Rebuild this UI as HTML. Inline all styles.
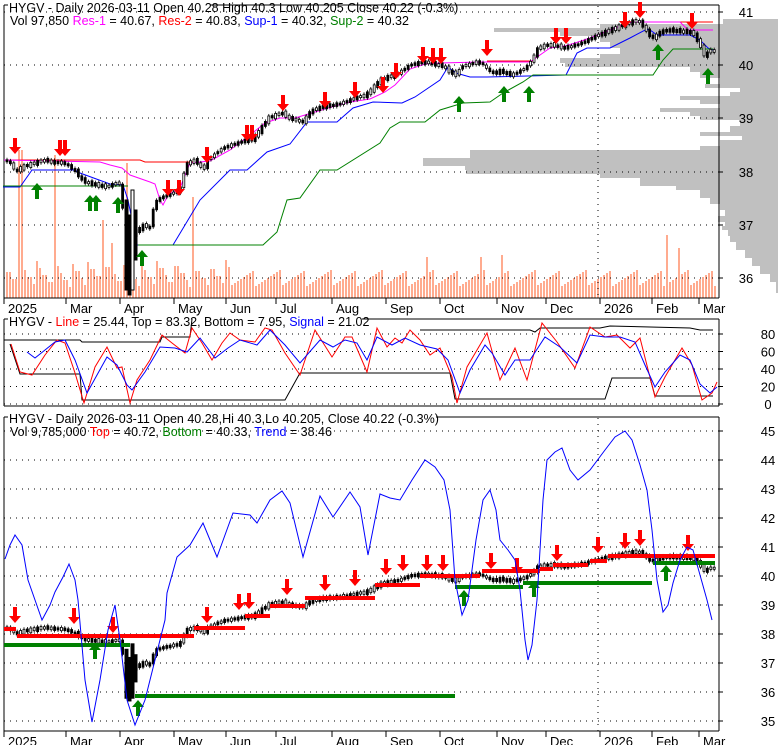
<!DOCTYPE html>
<html><head><meta charset="utf-8">
<style>
html,body{margin:0;padding:0;background:#fff;}
svg{display:block;font-family:"Liberation Sans",sans-serif;}
</style></head>
<body>
<svg id="c" width="780" height="745" viewBox="0 0 780 745" xmlns="http://www.w3.org/2000/svg">
<g id="bg"></g>
<g id="g"></g>
<g font-size="12.5" fill="#000">
<text x="9" y="12">HYGV - Daily 2026-03-11 Open 40.28  High 40.3  Low 40.205  Close 40.22 (-0.3%)</text>
<text x="10" y="25">Vol 97,850 <tspan fill="#ff00ff">Res-1</tspan> = 40.67, <tspan fill="#ff0000">Res-2</tspan> = 40.83, <tspan fill="#0000ff">Sup-1</tspan> = 40.32, <tspan fill="#008000">Sup-2</tspan> = 40.32</text>
<text x="9" y="326">HYGV - <tspan fill="#ff0000">Line</tspan> = 25.44, Top = 83.32, Bottom = 7.95, <tspan fill="#0000ff">Signal</tspan> = 21.02</text>
<text x="9" y="423">HYGV - Daily 2026-03-11 Open 40.28,Hi 40.3,Lo 40.205, Close 40.22 (-0.3%)</text>
<text x="10" y="436">Vol 9,785,000 <tspan fill="#ff0000">Top</tspan> = 40.72, <tspan fill="#008000">Bottom</tspan> = 40.33, <tspan fill="#0000ff">Trend</tspan> = 38.46</text>
</g>
<g font-size="13" fill="#000" id="ax"></g>
</svg>
<script>
(function(){
var NS="http://www.w3.org/2000/svg";
var G=document.getElementById('g'),BG=document.getElementById('bg'),AX=document.getElementById('ax');
function el(par,t,a){var e=document.createElementNS(NS,t);for(var k in a)e.setAttribute(k,a[k]);par.appendChild(e);return e;}
function pl(par,pts,col,w){el(par,'polyline',{points:pts.map(function(p){return p[0]+','+p[1]}).join(' '),fill:'none',stroke:col,'stroke-width':w||1});}
function txt(x,y,s,anchor){var t=el(AX,'text',{x:x,y:y});t.textContent=s;if(anchor)t.setAttribute('text-anchor',anchor);}
var R=719,L=4;
var prof=[[19,723],[24,600],[28,494],[32,560],[36,600],[42,610],[48,620],[54,600],[58,560],[63,565],[67,690],[72,700],[78,720],[84,705],[88,740],[92,730],[96,680],[100,700],[104,720],[108,660],[112,690],[116,700],[120,740],[126,730],[132,700],[136,742],[140,720],[146,700],[150,470],[154,470],[158,423],[162,423],[166,465],[170,466],[174,600],[178,640],[182,640],[186,676],[190,700],[194,700],[198,710],[204,720],[210,725],[216,718],[222,725],[226,722],[230,728],[236,730],[242,736],[250,745],[258,752],[266,760],[274,770],[282,776],[293,778]];
var d='M778,19';for(var i=0;i<prof.length;i++){var y=prof[i][0],ny=(i+1<prof.length?prof[i+1][0]:293);d+=' L'+prof[i][1]+','+y+' L'+prof[i][1]+','+ny;}d+=' L778,293 Z';
el(BG,'path',{d:d,fill:'#c0c0c0'});
function frame(tp,bot,tx){el(G,'line',{x1:L,y1:tp,x2:L,y2:bot,stroke:'#000'});el(G,'line',{x1:L,y1:bot,x2:R,y2:bot,stroke:'#000'});el(G,'line',{x1:R,y1:tp,x2:R,y2:bot,stroke:'#000'});el(G,'line',{x1:tx,y1:tp,x2:R,y2:tp,stroke:'#000'});el(G,'line',{x1:L,y1:tp,x2:8,y2:tp,stroke:'#000'});}
function hgrid(ys){ys.forEach(function(y){el(G,'line',{x1:L,y1:y,x2:R,y2:y,stroke:'#000','stroke-dasharray':'1,5'});el(G,'line',{x1:R,y1:y,x2:R+4,y2:y,stroke:'#000'});});}
var p1=[12,65,118,172,225,278];hgrid(p1);
['41','40','39','38','37','36'].forEach(function(s,i){txt(746,p1[i]+5,s,'middle');});
el(G,'line',{x1:598,y1:6,x2:598,y2:298,stroke:'#000','stroke-dasharray':'1,5'});
var p2=[334,351.5,369,386.5,404];hgrid(p2);
['80','60','40','20','0'].forEach(function(s,i){txt(768,p2[i]+5,s,'middle');});
var p3=[];for(var k=0;k<11;k++)p3.push(431+k*29);hgrid(p3);
['45','44','43','42','41','40','39','38','37','36','35'].forEach(function(s,i){txt(768,p3[i]+5,s,'middle');});
el(G,'line',{x1:598,y1:418,x2:598,y2:731,stroke:'#000','stroke-dasharray':'1,5'});
var mo=[[4,'2025'],[66,'Mar'],[120,'Apr'],[174,'May'],[226,'Jun'],[276,'Jul'],[332,'Aug'],[386,'Sep'],[440,'Oct'],[497,'Nov'],[546,'Dec'],[600,'2026'],[652,'Feb'],[699,'Mar']];
[298,731].forEach(function(by){mo.forEach(function(m){el(G,'line',{x1:m[0],y1:by,x2:m[0],y2:by+6,stroke:'#000'});var t=el(AX,'text',{x:m[0]+4,y:by+15});t.textContent=m[1];});});
var spikes={18:150,21:150,55:155,103:220,110:243,127:163,193:197,426:257,480:257,502:255,665:235,678:248};
for(var x=6;x<717;x+=3){var h=10+((x*37)%23)+((x*13)%7);if(x>230)h=12+((x*29)%17);var vt=298-h;for(var s in spikes){if(Math.abs(s-x)<2)vt=spikes[s];}
el(BG,'rect',{x:x,y:vt,width:2,height:298-vt,fill:'#ffab8f'});}
frame(5,298,210);frame(319,406,362);frame(417,731,436);
var P=[[5,160],[12,162],[18,172],[22,168],[30,165],[40,162],[48,160],[55,163],[62,162],[70,165],[78,172],[84,180],[90,183],[98,185],[108,187],[116,184],[121,182],[124,200],[127,235],[130,250],[134,235],[140,230],[146,225],[152,228],[156,205],[162,198],[168,196],[175,193],[182,190],[188,165],[195,160],[200,163],[205,170],[210,160],[216,155],[222,150],[230,146],[240,143],[248,140],[255,139],[262,130],[270,118],[278,115],[285,113],[290,118],[298,120],[305,122],[312,112],[320,108],[330,106],[338,105],[345,103],[352,100],[360,97],[368,95],[375,88],[382,80],[390,77],[398,75],[405,70],[412,65],[420,63],[428,62],[435,64],[445,66],[452,72],[458,75],[464,66],[470,65],[478,62],[485,64],[490,70],[496,73],[502,71],[508,73],[515,75],[520,72],[528,68],[534,60],[540,48],[548,45],[555,45],[562,47],[568,48],[575,46],[582,44],[590,40],[598,36],[605,33],[612,30],[620,27],[628,24],[636,21],[642,22],[648,30],[652,36],[656,38],[662,32],[670,30],[680,31],[690,32],[696,34],[700,42],[704,48],[707,58],[710,52],[713,50],[717,52]];
function interp(x){for(var i=0;i<P.length-1;i++){if(x>=P[i][0]&&x<=P[i+1][0]){var t=(x-P[i][0])/(P[i+1][0]-P[i][0]);return P[i][1]+t*(P[i+1][1]-P[i][1]);}}return P[P.length-1][1];}
function to3(y){return 547+(y-12)*0.544;}
pl(G,[[4,160],[140,160],[145,162],[195,162]],'#ff0000');
pl(G,[[487,61],[533,61]],'#ff0000');pl(G,[[680,22],[713,22]],'#ff0000');
pl(G,[[4,160],[100,162],[110,165],[122,168],[130,175],[150,182],[155,184],[160,200],[163,205],[168,195],[180,188],[190,163],[210,161],[230,150],[250,135],[265,123],[280,118],[295,118],[315,112],[335,106],[350,102],[370,99],[385,92],[395,85],[410,69],[425,64],[440,63],[480,62],[530,62],[540,55],[550,48],[565,46],[575,43],[590,38],[605,32],[620,26],[632,22],[680,22],[688,30],[713,30]],'#ff00ff');
pl(G,[[3,187],[20,187],[32,170],[75,170],[80,173],[110,184],[123,185],[128,200],[137,245],[173,245],[200,200],[230,170],[247,170],[267,152],[290,144],[307,122],[337,122],[353,108],[373,102],[402,103],[415,97],[440,80],[448,67],[456,73],[470,77],[487,77],[566,75],[570,67],[577,53],[587,48],[610,48],[630,38],[647,29],[650,30],[657,35],[690,35],[700,40],[708,48],[713,50]],'#0000ff');
pl(G,[[3,186],[110,186],[128,186]],'#008000');
pl(G,[[138,245],[263,245],[277,232],[287,200],[300,198],[320,170],[337,170],[380,143],[390,128],[400,122],[425,122],[440,110],[463,103],[490,102],[503,93],[523,82],[533,75],[653,75],[663,60],[673,49],[713,49]],'#008000');
function candles(map){
 for(var x=6;x<716;x+=3.4){var j=((Math.round(x)*17)%7-3)*0.5;var y=map(interp(x))+j;var n=map(interp(x+3))-j*0.5;var ct=Math.min(y,n)-1,ch=Math.abs(n-y)+2;var fill=((Math.round(x)*7)%5<2)?'#fff':'#000';
 el(G,'line',{x1:x+1,y1:ct-2,x2:x+1,y2:ct+ch+2,stroke:'#000','stroke-width':0.8});
 el(G,'rect',{x:x,y:ct,width:2,height:ch,fill:fill,stroke:'#000','stroke-width':0.8});}
}
candles(function(v){return v;});
[[125,200,290],[128,215,295],[131,190,290],[134,210,260]].forEach(function(c){el(G,'rect',{x:c[0],y:c[1],width:3,height:c[2]-c[1],fill:(c[0]==131?'#fff':'#000'),stroke:'#000'});});
candles(to3);
[[125,to3(200),to3(290)],[128,to3(215),to3(295)],[131,to3(190),to3(290)],[134,to3(210),to3(260)]].forEach(function(c){el(G,'rect',{x:c[0],y:c[1],width:3,height:c[2]-c[1],fill:'#000',stroke:'#000'});});
function dn(cx,t){el(G,'path',{d:'M'+(cx-2)+','+t+' h4 v9 h4 l-6,7 l-6,-7 h4 z',fill:'#ff0000'});}
function up(cx,t){el(G,'path',{d:'M'+cx+','+t+' l6,7 h-4 v9 h-4 v-9 h-4 z',fill:'#008000'});}
[[15,138],[60,140],[65,140],[168,180],[179,180],[207,147],[247,125],[252,125],[283,95],[325,92],[355,82],[383,77],[396,63],[423,47],[433,48],[441,48],[487,40],[556,28],[566,28],[625,12],[640,2],[692,13]].forEach(function(a){dn(a[0],a[1]);});
[[37,183],[90,195],[96,195],[118,197],[142,250],[459,96],[504,86],[529,86],[658,44],[708,68]].forEach(function(a){up(a[0],a[1]);});
pl(G,[[4,340],[80,340],[82,342],[160,342],[162,337],[190,337],[192,319]],'#000');
pl(G,[[420,330],[530,330],[535,332],[540,328],[600,328],[610,326],[690,328],[700,330],[713,330]],'#000');
pl(G,[[10,344],[20,374],[80,374],[82,400],[285,400],[300,373],[450,373],[455,399],[605,399],[612,378],[650,378],[655,396],[713,396]],'#000');
var red2=[[11,344],[20,372],[32,375],[45,355],[57,340],[65,343],[75,373],[84,403],[95,367],[107,347],[117,368],[122,367],[130,403],[137,380],[150,360],[162,335],[172,343],[185,353],[192,328],[202,343],[212,360],[222,343],[230,333],[240,340],[255,342],[265,328],[272,330],[285,353],[300,375],[315,330],[332,357],[345,337],[352,337],[367,372],[377,328],[387,347],[395,338],[402,343],[410,330],[420,340],[430,355],[440,348],[452,377],[457,403],[467,367],[477,350],[487,333],[500,380],[515,348],[527,380],[542,323],[557,342],[575,368],[590,327],[605,337],[617,335],[630,348],[640,338],[655,397],[665,377],[682,348],[692,365],[702,400],[712,393],[717,382]];
pl(G,red2,'#ff0000');
var blue2=[[27,352],[35,358],[45,350],[55,342],[65,340],[75,360],[87,393],[97,375],[107,357],[117,365],[127,385],[132,390],[145,372],[160,347],[175,348],[187,352],[200,338],[215,358],[228,348],[240,340],[257,345],[270,330],[285,345],[300,363],[320,340],[333,347],[345,340],[357,343],[367,360],[377,337],[392,345],[405,338],[420,345],[437,349],[448,360],[460,393],[470,370],[485,345],[492,353],[505,375],[515,360],[530,360],[545,337],[560,347],[577,363],[590,335],[605,337],[620,337],[635,342],[645,365],[655,387],[665,372],[680,355],[690,360],[700,384],[710,393],[717,387]];
pl(G,blue2,'#0000ff');
function band(x1,x2,y,c){el(G,'rect',{x:x1,y:y-2,width:x2-x1,height:4,fill:c});}
[[4,16,629],[17,194,636],[194,245,628],[245,270,616],[270,305,606],[305,375,598],[375,420,585],[420,480,576],[482,540,571],[540,553,569],[553,588,565],[590,607,561],[608,715,556]].forEach(function(b){band(b[0],b[1],b[2],'#ff0000');});
[[4,130,645],[135,455,696],[455,523,587],[523,652,583],[653,715,563]].forEach(function(b){band(b[0],b[1],b[2],'#008000');});
[15,74,113,207,239,249,287,325,355,386,403].forEach(function(x){dn(x,Math.round(to3(interp(x))-24));});
[[427,555],[443,555],[491,553],[517,558],[557,545],[598,537],[625,533],[640,530],[688,535]].forEach(function(a){dn(a[0],a[1]);});
[[95,643],[138,700],[464,590],[534,581],[666,565]].forEach(function(a){up(a[0],a[1]);});
pl(G,[[5,559],[10,545],[15,535],[22,545],[28,580],[35,600],[42,620],[50,605],[55,592],[63,577],[69,564],[75,580],[78,600],[85,680],[92,722],[100,680],[108,630],[115,605],[120,640],[127,700],[135,725],[145,700],[155,660],[165,620],[167,593],[177,557],[190,545],[203,523],[217,557],[233,513],[250,515],[257,523],[270,500],[282,491],[290,503],[303,557],[320,496],[333,517],[350,492],[360,507],[368,555],[380,494],[390,498],[400,500],[412,480],[425,460],[435,467],[444,480],[450,510],[455,580],[462,615],[468,600],[476,540],[483,500],[490,490],[496,510],[500,540],[508,550],[515,560],[520,590],[525,640],[528,660],[532,645],[537,600],[543,500],[547,460],[555,452],[562,448],[570,470],[578,480],[590,470],[605,450],[615,437],[625,431],[632,440],[640,465],[647,490],[652,530],[657,580],[663,612],[668,605],[673,583],[680,560],[687,547],[693,550],[700,575],[707,600],[712,620]],'#0000ff');
})();
</script>
</body></html>
